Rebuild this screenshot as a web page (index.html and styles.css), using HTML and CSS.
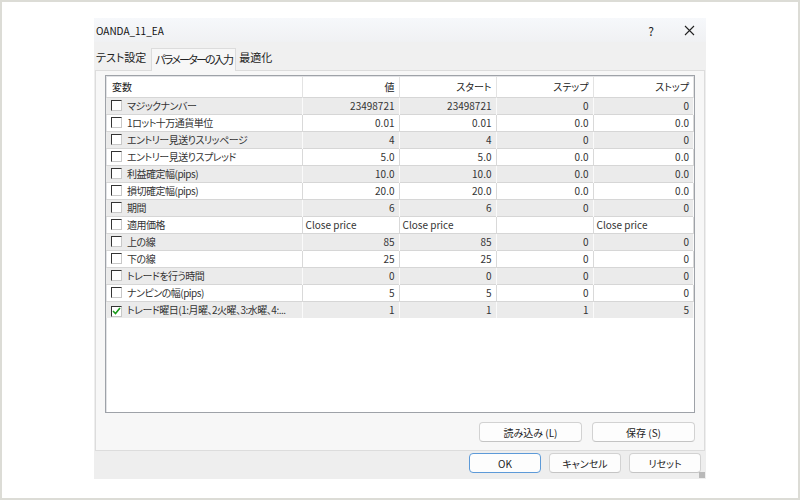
FILE: index.html
```html
<!DOCTYPE html>
<html lang="ja">
<head>
    <meta charset="UTF-8">
    <title>OANDA_11_EA</title>
    <link rel="stylesheet" href="styles.css">
</head>
<body>
    <div class="frame">
        <div class="dialog">
            <div class="titlebar">
                <span class="title">OANDA_11_EA</span>
                <span class="title-btn help">?</span>
                <span class="title-btn close">
                    <svg width="11" height="11" viewBox="0 0 11 11"><path d="M1 1 L10 10 M10 1 L1 10" stroke="#222" stroke-width="1.1" fill="none"/></svg>
                </span>
            </div>

            <div class="tabs">
                <div class="tab">テスト設定</div>
                <div class="tab active">パラメーターの入力</div>
                <div class="tab">最適化</div>
            </div>

            <div class="panel">
                <div class="list">
                    <table class="params">
                        <colgroup>
                            <col class="c-name">
                            <col class="c-val">
                            <col class="c-val">
                            <col class="c-val">
                            <col>
                        </colgroup>
                        <thead>
                            <tr>
                                <th class="left">変数</th>
                                <th>値</th>
                                <th>スタート</th>
                                <th>ステップ</th>
                                <th>ストップ</th>
                            </tr>
                        </thead>
                        <tbody>
                            <tr><td class="name"><span class="cb"></span>マジックナンバー</td><td>23498721</td><td>23498721</td><td>0</td><td>0</td></tr>
                            <tr><td class="name"><span class="cb"></span>1ロット十万通貨単位</td><td>0.01</td><td>0.01</td><td>0.0</td><td>0.0</td></tr>
                            <tr><td class="name"><span class="cb"></span>エントリー見送りスリッページ</td><td>4</td><td>4</td><td>0</td><td>0</td></tr>
                            <tr><td class="name"><span class="cb"></span>エントリー見送りスプレッド</td><td>5.0</td><td>5.0</td><td>0.0</td><td>0.0</td></tr>
                            <tr><td class="name"><span class="cb"></span>利益確定幅(pips)</td><td>10.0</td><td>10.0</td><td>0.0</td><td>0.0</td></tr>
                            <tr><td class="name"><span class="cb"></span>損切確定幅(pips)</td><td>20.0</td><td>20.0</td><td>0.0</td><td>0.0</td></tr>
                            <tr><td class="name"><span class="cb"></span>期間</td><td>6</td><td>6</td><td>0</td><td>0</td></tr>
                            <tr><td class="name"><span class="cb"></span>適用価格</td><td class="left">Close price</td><td class="left">Close price</td><td></td><td class="left">Close price</td></tr>
                            <tr><td class="name"><span class="cb"></span>上の線</td><td>85</td><td>85</td><td>0</td><td>0</td></tr>
                            <tr><td class="name"><span class="cb"></span>下の線</td><td>25</td><td>25</td><td>0</td><td>0</td></tr>
                            <tr><td class="name"><span class="cb"></span>トレードを行う時間</td><td>0</td><td>0</td><td>0</td><td>0</td></tr>
                            <tr><td class="name"><span class="cb"></span>ナンピンの幅(pips)</td><td>5</td><td>5</td><td>0</td><td>0</td></tr>
                            <tr><td class="name"><span class="cb checked"><svg width="9" height="8" viewBox="0 0 9 8"><path d="M1 4 L3.5 6.5 L8 1" stroke="#1a9a1a" stroke-width="1.6" fill="none"/></svg></span>トレード曜日(1:月曜、2火曜、3:水曜、4:...</td><td>1</td><td>1</td><td>1</td><td>5</td></tr>
                        </tbody>
                    </table>
                </div>

                <div class="panel-buttons">
                    <button class="btn wide">読み込み (L)</button>
                    <button class="btn wide">保存 (S)</button>
                </div>
            </div>

            <div class="dialog-buttons">
                <button class="btn primary">OK</button>
                <button class="btn">キャンセル</button>
                <button class="btn">リセット</button>
            </div>
            <span class="grip"></span>
        </div>
    </div>
</body>
</html>
```

FILE: styles.css
```css
* {
    box-sizing: border-box;
}

body {
    margin: 0;
    font-family: "Noto Sans CJK JP", sans-serif;
    font-feature-settings: "palt";
    color: #222;
}

.frame {
    width: 800px;
    height: 500px;
    border: 2px solid #dcdcd6;
    background-color: #fff;
    padding: 16px 0 0 92px;
}

.dialog {
    position: relative;
    width: 612px;
    height: 461px;
    background-color: #eeeeee;
    display: flex;
    flex-direction: column;
}

.titlebar {
    height: 24px;
    display: flex;
    align-items: center;
    padding-left: 2px;
    background: linear-gradient(#f6f8fb, #f0f1f3);
    font-size: 10px;
}

.title {
    flex-grow: 1;
    color: #111;
}

.title-btn {
    display: inline-flex;
    justify-content: center;
    align-items: center;
    height: 24px;
    font-size: 12px;
}

.help {
    width: 42px;
}

.close {
    width: 34px;
}

.tabs {
    display: flex;
    align-items: flex-end;
    height: 28px;
    background-color: #f0f0f0;
    font-size: 11px;
}

.tab {
    padding: 0 4px 3px 2px;
    height: 21px;
    line-height: 17px;
    color: #222;
}

.tab.active {
    height: 23px;
    padding: 2px 3px 0 3px;
    letter-spacing: -1.8px;
    background-color: #f7f7f7;
    border: 1px solid #dcdcdc;
    border-bottom: none;
    margin: 0 1px 0 1px;
    position: relative;
    top: 1px;
}

.panel {
    margin-left: 1px;
    width: 610px;
    height: 381px;
    background-color: #f7f7f7;
    border: 1px solid #dcdcdc;
    padding: 4px 9px 0 9px;
}

.list {
    height: 338px;
    background-color: #fff;
    border: 1px solid #9ea2a8;
    box-shadow: inset 1px 1px 0 #e2e3e6;
    overflow: hidden;
}

.params {
    width: 100%;
    border-collapse: collapse;
    table-layout: fixed;
    font-size: 10px;
    color: #333;
}

.c-name {
    width: 196px;
}

.c-val {
    width: 97px;
}

.params th {
    height: 21px;
    font-weight: normal;
    text-align: right;
    padding: 0 4px 0 4px;
    border-right: 1px solid #e3e3e3;
    color: #222;
}

.params th.left {
    text-align: left;
    padding-left: 6px;
}

.params td {
    height: 17px;
    padding: 0 4px 0 3px;
    text-align: right;
    border-right: 1px solid #d9d9d9;
    border-top: 1px solid #d6d6d6;
    white-space: nowrap;
    overflow: hidden;
}

.params td.left {
    text-align: left;
}

.params tbody tr:nth-child(odd) td {
    background-color: #ebebeb;
    border-right-color: #fafafa;
}

.params td.name {
    text-align: left;
    padding-left: 5px;
    letter-spacing: -0.5px;
}

.cb {
    display: inline-flex;
    align-items: center;
    justify-content: center;
    width: 11px;
    height: 11px;
    margin-right: 5px;
    vertical-align: -1px;
    background-color: #fff;
    border-top: 1px solid #333;
    border-left: 1px solid #333;
    border-right: 1px solid #c8c8c8;
    border-bottom: 1px solid #c8c8c8;
}

.panel-buttons {
    display: flex;
    justify-content: flex-end;
    gap: 10px;
    padding: 9px 0 0 0;
}

.btn {
    font-family: "Noto Sans CJK JP", sans-serif;
    font-feature-settings: "palt";
    font-size: 10px;
    color: #222;
    background-color: #fdfdfd;
    border: 1px solid #d2d2d2;
    border-bottom-color: #c4c4c4;
    border-radius: 4px;
    height: 20px;
    width: 72px;
    padding: 0;
}

.btn.wide {
    width: 103px;
}

.btn.primary {
    border: 1.5px solid #5d9ad8;
}

.dialog-buttons {
    display: flex;
    justify-content: flex-end;
    gap: 8px;
    padding: 2px 5px 0 0;
}

.grip {
    position: absolute;
    right: 1px;
    bottom: 1px;
    width: 6px;
    height: 6px;
    background-image: radial-gradient(#b5b5b5 0.7px, transparent 0.8px);
    background-size: 2px 2px;
}
```
